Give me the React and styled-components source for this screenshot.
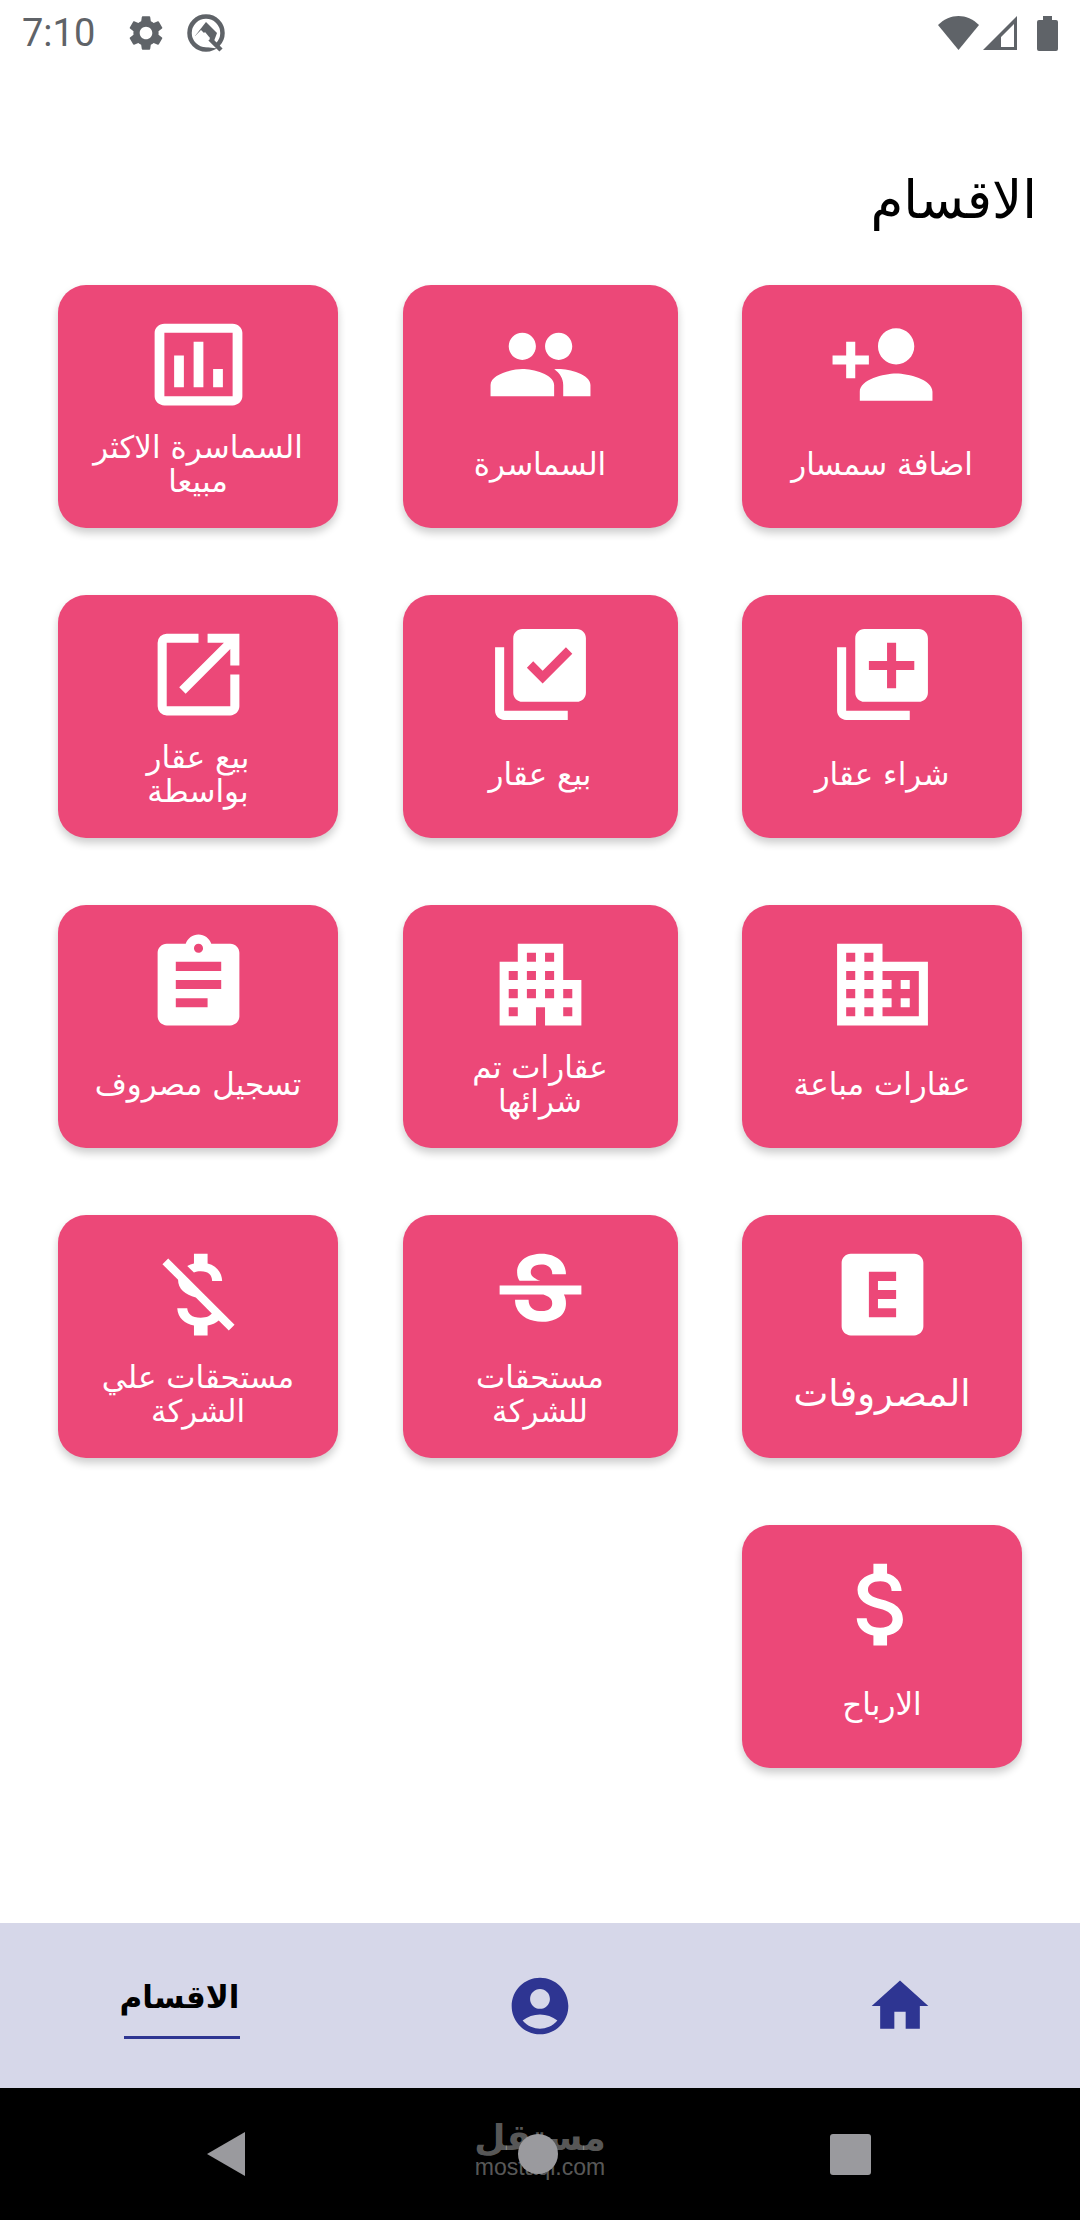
import React from "react";
import styled, { createGlobalStyle } from "styled-components";
import {
    MdPersonAdd,
    MdPeople,
    MdOutlineAssessment,
    MdLibraryAdd,
    MdLibraryAddCheck,
    MdOpenInNew,
    MdBusiness,
    MdApartment,
    MdAssignment,
    MdExplicit,
    MdStrikethroughS,
    MdMoneyOff,
    MdAttachMoney,
    MdHome,
    MdAccountCircle,
    MdSettings,
} from "react-icons/md";

const sections = [
    { label: "اضافة سمسار", icon: MdPersonAdd },
    { label: "السماسرة", icon: MdPeople },
    { label: "السماسرة الاكثر\nمبيعا", icon: MdOutlineAssessment, wide: true },
    { label: "شراء عقار", icon: MdLibraryAdd },
    { label: "بيع عقار", icon: MdLibraryAddCheck },
    { label: "بيع عقار\nبواسطة", icon: MdOpenInNew },
    { label: "عقارات مباعة", icon: MdBusiness },
    { label: "عقارات تم\nشرائها", icon: MdApartment },
    { label: "تسجيل مصروف", icon: MdAssignment },
    { label: "المصروفات", icon: MdExplicit, big: true },
    { label: "مستحقات\nللشركة", icon: MdStrikethroughS },
    { label: "مستحقات علي\nالشركة", icon: MdMoneyOff },
    { label: "الارباح", icon: MdAttachMoney },
];

function App() {
    return (
        <>
            <GlobalStyle />
            <Screen>
                <StatusBar>
                    <StatusLeft>
                        <Clock>7:10</Clock>
                        <MdSettings size={42} />
                        <svg width="44" height="44" viewBox="0 0 44 44">
                            <circle cx="22" cy="22" r="16.5" fill="none" stroke="#5f6368" strokeWidth="4.5" />
                            <path d="M22 11 L33 22 L30 30 L11 25 Z" fill="#5f6368" />
                            <path d="M10 26 L21 36 L38 38 L25 27 L17 19 Z" fill="#fff" />
                            <path d="M15 27 L21 21 L26 27 L20 32 Z" fill="#fff" />
                            <path d="M26 28 L37 39" stroke="#5f6368" strokeWidth="4.5" />
                        </svg>
                    </StatusLeft>
                    <StatusRight>
                        <svg width="41" height="34" viewBox="0 0 41 34" fill="#5f6368">
                            <path d="M0 9 C12 -3 29 -3 41 9 L20.5 34 Z" />
                        </svg>
                        <svg width="34" height="34" viewBox="0 0 34 34" fill="#5f6368">
                            <path fillRule="evenodd" d="M34 0 V34 H0 Z M31 8 L18 21 V31 H31 Z" />
                        </svg>
                        <Battery width="21" height="35" viewBox="0 0 21 35" fill="#5f6368">
                            <path d="M6 0 H15 V4 H19 Q21 4 21 6 V33 Q21 35 19 35 H2 Q0 35 0 33 V6 Q0 4 2 4 H6 Z" />
                        </Battery>
                    </StatusRight>
                </StatusBar>
                <Content>
                    <Heading>الاقسام</Heading>
                    <SectionGrid>
                        {sections.map((section) => {
                            const Icon = section.icon;
                            return (
                                <Card key={section.label}>
                                    <CardIcon $wide={section.wide}>
                                        <Icon preserveAspectRatio={section.wide ? "none" : undefined} />
                                    </CardIcon>
                                    <CardLabel $big={section.big}>{section.label}</CardLabel>
                                </Card>
                            );
                        })}
                    </SectionGrid>
                </Content>
                <BottomTabs>
                    <Tab>
                        <MdHome size={68} />
                    </Tab>
                    <Tab>
                        <MdAccountCircle size={68} />
                    </Tab>
                    <Tab>
                        <ActiveTab>الاقسام</ActiveTab>
                    </Tab>
                </BottomTabs>
                <NavBar>
                    <BackButton />
                    <HomeButton />
                    <RecentButton />
                    <Watermark>
                        <WatermarkName>مستقل</WatermarkName>
                        <WatermarkUrl>mostaql.com</WatermarkUrl>
                    </Watermark>
                </NavBar>
            </Screen>
        </>
    );
}

const GlobalStyle = createGlobalStyle`
    * {
        box-sizing: border-box;
    }
    body {
        margin: 0;
        background: #fff;
        font-family: "DejaVu Sans", "Noto Sans", sans-serif;
    }
`;

const Screen = styled.div`
    position: relative;
    width: 1080px;
    height: 2220px;
    display: flex;
    flex-direction: column;
    overflow: hidden;
`;

const StatusBar = styled.div`
    height: 66px;
    padding: 0 22px;
    display: flex;
    align-items: center;
    justify-content: space-between;
    color: #5f6368;
`;

const StatusLeft = styled.div`
    display: flex;
    align-items: center;
    gap: 17px;
`;

const StatusRight = styled.div`
    display: flex;
    align-items: center;
    gap: 4px;
`;

const Battery = styled.svg`
    margin-left: 16px;
`;

const Clock = styled.span`
    font-family: Roboto, sans-serif;
    font-size: 38px;
    margin-right: 13px;
`;

const Content = styled.div`
    flex: 1;
    padding: 103px 58px 0;
`;

const Heading = styled.h1`
    margin: 0 -15px 0 0;
    height: 116px;
    direction: rtl;
    font-size: 53px;
    line-height: 62px;
    font-weight: 500;
    color: #000;
`;

const SectionGrid = styled.div`
    direction: rtl;
    display: grid;
    grid-template-columns: 280px 275px 280px;
    justify-content: space-between;
    row-gap: 67px;
`;

const Card = styled.div`
    height: 243px;
    padding: 25px 8px 20px;
    display: flex;
    flex-direction: column;
    align-items: center;
    border-radius: 28px;
    background: #ec4878;
    box-shadow: 0 5px 9px rgba(0, 0, 0, 0.2);
    color: #fff;
`;

const CardIcon = styled.div`
    height: 109px;
    flex: none;
    display: flex;
    justify-content: center;
    svg {
        display: block;
        flex: none;
        width: ${(props) => (props.$wide ? "117px" : "109px")};
        height: 109px;
    }
`;

const CardLabel = styled.div`
    flex: 1;
    display: flex;
    align-items: center;
    justify-content: center;
    text-align: center;
    white-space: pre-line;
    font-size: ${(props) => (props.$big ? "37px" : "31px")};
    line-height: 34px;
    font-weight: 400;
`;

const BottomTabs = styled.div`
    height: 165px;
    direction: rtl;
    display: grid;
    grid-template-columns: repeat(3, 1fr);
    background: #d6d7e9;
    color: #2e3592;
`;

const Tab = styled.div`
    display: flex;
    align-items: center;
    justify-content: center;
`;

const ActiveTab = styled.div`
    width: 116px;
    height: 66px;
    margin-left: 3px;
    text-align: center;
    border-bottom: 3px solid #2e3592;
    color: #000;
    font-size: 31px;
    line-height: 48px;
    font-weight: 700;
    white-space: nowrap;
`;

const NavBar = styled.div`
    position: relative;
    height: 132px;
    background: #000;
    display: flex;
    align-items: center;
    padding-left: 207px;
    padding-right: 209px;
    justify-content: space-between;
`;

const BackButton = styled.div`
    width: 38px;
    height: 44px;
    background: #9a9a9e;
    clip-path: polygon(100% 0, 100% 100%, 0 50%);
`;

const HomeButton = styled.div`
    position: relative;
    z-index: 1;
    width: 40px;
    height: 40px;
    border-radius: 50%;
    background: #9a9a9e;
`;

const RecentButton = styled.div`
    width: 41px;
    height: 41px;
    border-radius: 3px;
    background: #9a9a9e;
`;

const Watermark = styled.div`
    position: absolute;
    left: 475px;
    top: 30px;
    width: 130px;
    display: flex;
    flex-direction: column;
    align-items: center;
    color: rgba(255, 255, 255, 0.36);
`;

const WatermarkName = styled.div`
    font-size: 36px;
    line-height: 40px;
    font-weight: 700;
`;

const WatermarkUrl = styled.div`
    font-family: "Liberation Sans", sans-serif;
    font-size: 23px;
    line-height: 18px;
`;

export default App;
